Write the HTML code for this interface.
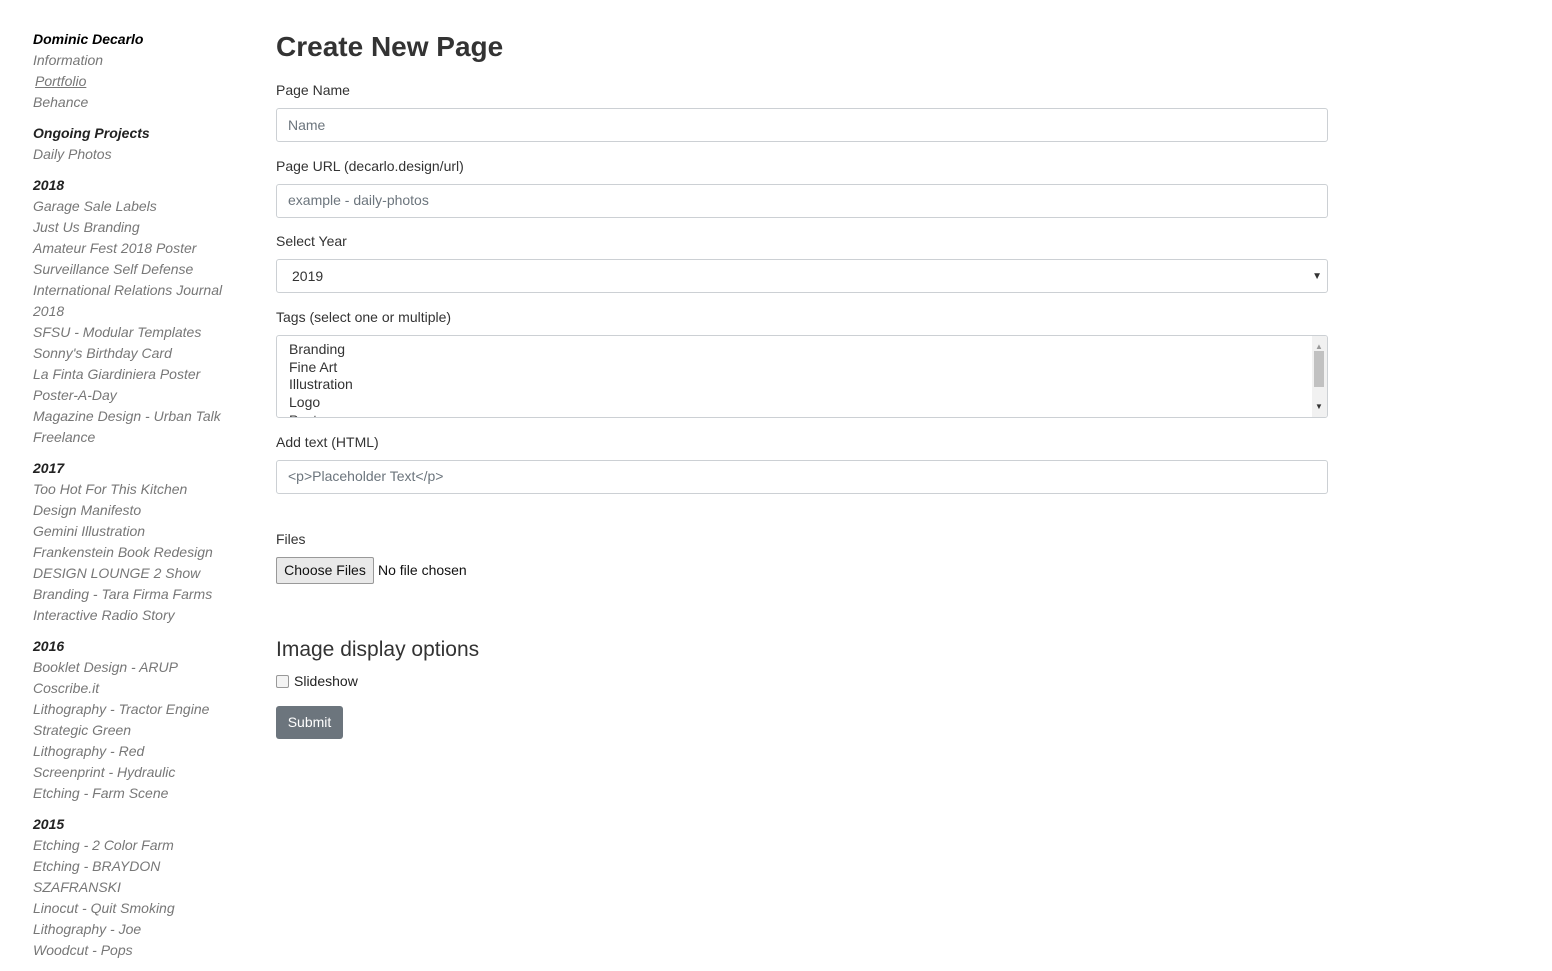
<!DOCTYPE html>
<html><head><meta charset="utf-8"><style>
body{margin:0;background:#fff;font-family:"Liberation Sans",sans-serif;color:#333;width:1552px;height:964px;overflow:hidden;position:relative}
.side{position:absolute;left:33px;top:29px;font-size:14px;font-style:italic;line-height:21px;color:#777}
.side div.g{margin-bottom:10px}
.side b{color:#222;display:block}
.side b.k{color:#000}
.a{position:absolute}
h1{position:absolute;left:276px;top:30px;margin:0;font-size:28px;font-weight:bold;color:#333;line-height:34px}
.lbl{position:absolute;left:276px;font-size:14px;color:#333;line-height:18px}
.inp{position:absolute;left:276px;height:32px;border:1px solid #ccd0d4;border-radius:3px;font-size:14px;color:#6c757d;line-height:32px;padding-left:11px;box-sizing:content-box}
</style></head><body>
<div class="side">
<div class="g"><b class="k">Dominic Decarlo</b>Information<br><span style="margin-left:2px;text-decoration:underline">Portfolio</span><br>Behance</div>
<div class="g"><b>Ongoing Projects</b>Daily Photos</div>
<div class="g"><b>2018</b>Garage Sale Labels<br>Just Us Branding<br>Amateur Fest 2018 Poster<br>Surveillance Self Defense<br>International Relations Journal<br>2018<br>SFSU - Modular Templates<br>Sonny's Birthday Card<br>La Finta Giardiniera Poster<br>Poster-A-Day<br>Magazine Design - Urban Talk<br>Freelance</div>
<div class="g"><b>2017</b>Too Hot For This Kitchen<br>Design Manifesto<br>Gemini Illustration<br>Frankenstein Book Redesign<br>DESIGN LOUNGE 2 Show<br>Branding - Tara Firma Farms<br>Interactive Radio Story</div>
<div class="g"><b>2016</b>Booklet Design - ARUP<br>Coscribe.it<br>Lithography - Tractor Engine<br>Strategic Green<br>Lithography - Red<br>Screenprint - Hydraulic<br>Etching - Farm Scene</div>
<div class="g"><b>2015</b>Etching - 2 Color Farm<br>Etching - BRAYDON<br>SZAFRANSKI<br>Linocut - Quit Smoking<br>Lithography - Joe<br>Woodcut - Pops</div>
</div>
<h1>Create New Page</h1>
<div class="lbl" style="top:81px">Page Name</div>
<div class="inp" style="top:108px;width:1039px">Name</div>
<div class="lbl" style="top:157px">Page URL (decarlo.design/url)</div>
<div class="inp" style="top:184px;width:1039px;line-height:31px">example - daily-photos</div>
<div class="lbl" style="top:232px">Select Year</div>
<div class="inp" style="top:259px;width:1035px;padding-left:15px;color:#333">2019<span style="position:absolute;right:5px;top:1px;font-size:10px;color:#333">▼</span></div>
<div class="lbl" style="top:308px">Tags (select one or multiple)</div>
<div class="a" style="left:276px;top:335px;width:1050px;height:81px;border:1px solid #ccd0d4;border-radius:3px;overflow:hidden;font-size:14px;line-height:17.7px;color:#333">
<div style="padding:5px 0 0 12px">Branding<br>Fine Art<br>Illustration<br>Logo<br>Poster</div>
<div class="a" style="right:0;top:0;width:15px;height:81px;background:#f1f1f1"><div class="a" style="left:2px;top:15px;width:10px;height:36px;background:#c1c1c1"></div><div class="a" style="left:3px;top:2px;font-size:8px;color:#999">▲</div><div class="a" style="left:3px;bottom:1px;font-size:8px;color:#333">▼</div></div>
</div>
<div class="lbl" style="top:433px">Add text (HTML)</div>
<div class="inp" style="top:460px;width:1039px;line-height:31px">&lt;p&gt;Placeholder Text&lt;/p&gt;</div>
<div class="lbl" style="top:530px">Files</div>
<div class="a" style="left:276px;top:557px;width:96px;height:25px;border:1px solid #999;border-radius:2px;background:#e9e9e9;font-size:14px;line-height:25px;text-align:center;color:#111">Choose Files</div>
<div class="a" style="left:378px;top:561px;font-size:14px;color:#111;line-height:18px">No file chosen</div>
<div class="a" style="left:276px;top:637px;font-size:21px;color:#333;line-height:25px">Image display options</div>
<div class="a" style="left:276px;top:675px;width:11px;height:11px;border:1px solid #999;border-radius:2px;background:#f4f4f4"></div>
<div class="a" style="left:294px;top:672px;font-size:14px;line-height:18px;color:#222">Slideshow</div>
<div class="a" style="left:276px;top:706px;width:67px;height:33px;background:#6c757d;border-radius:3px;color:#fff;font-size:14px;line-height:33px;text-align:center">Submit</div>
</body></html>
